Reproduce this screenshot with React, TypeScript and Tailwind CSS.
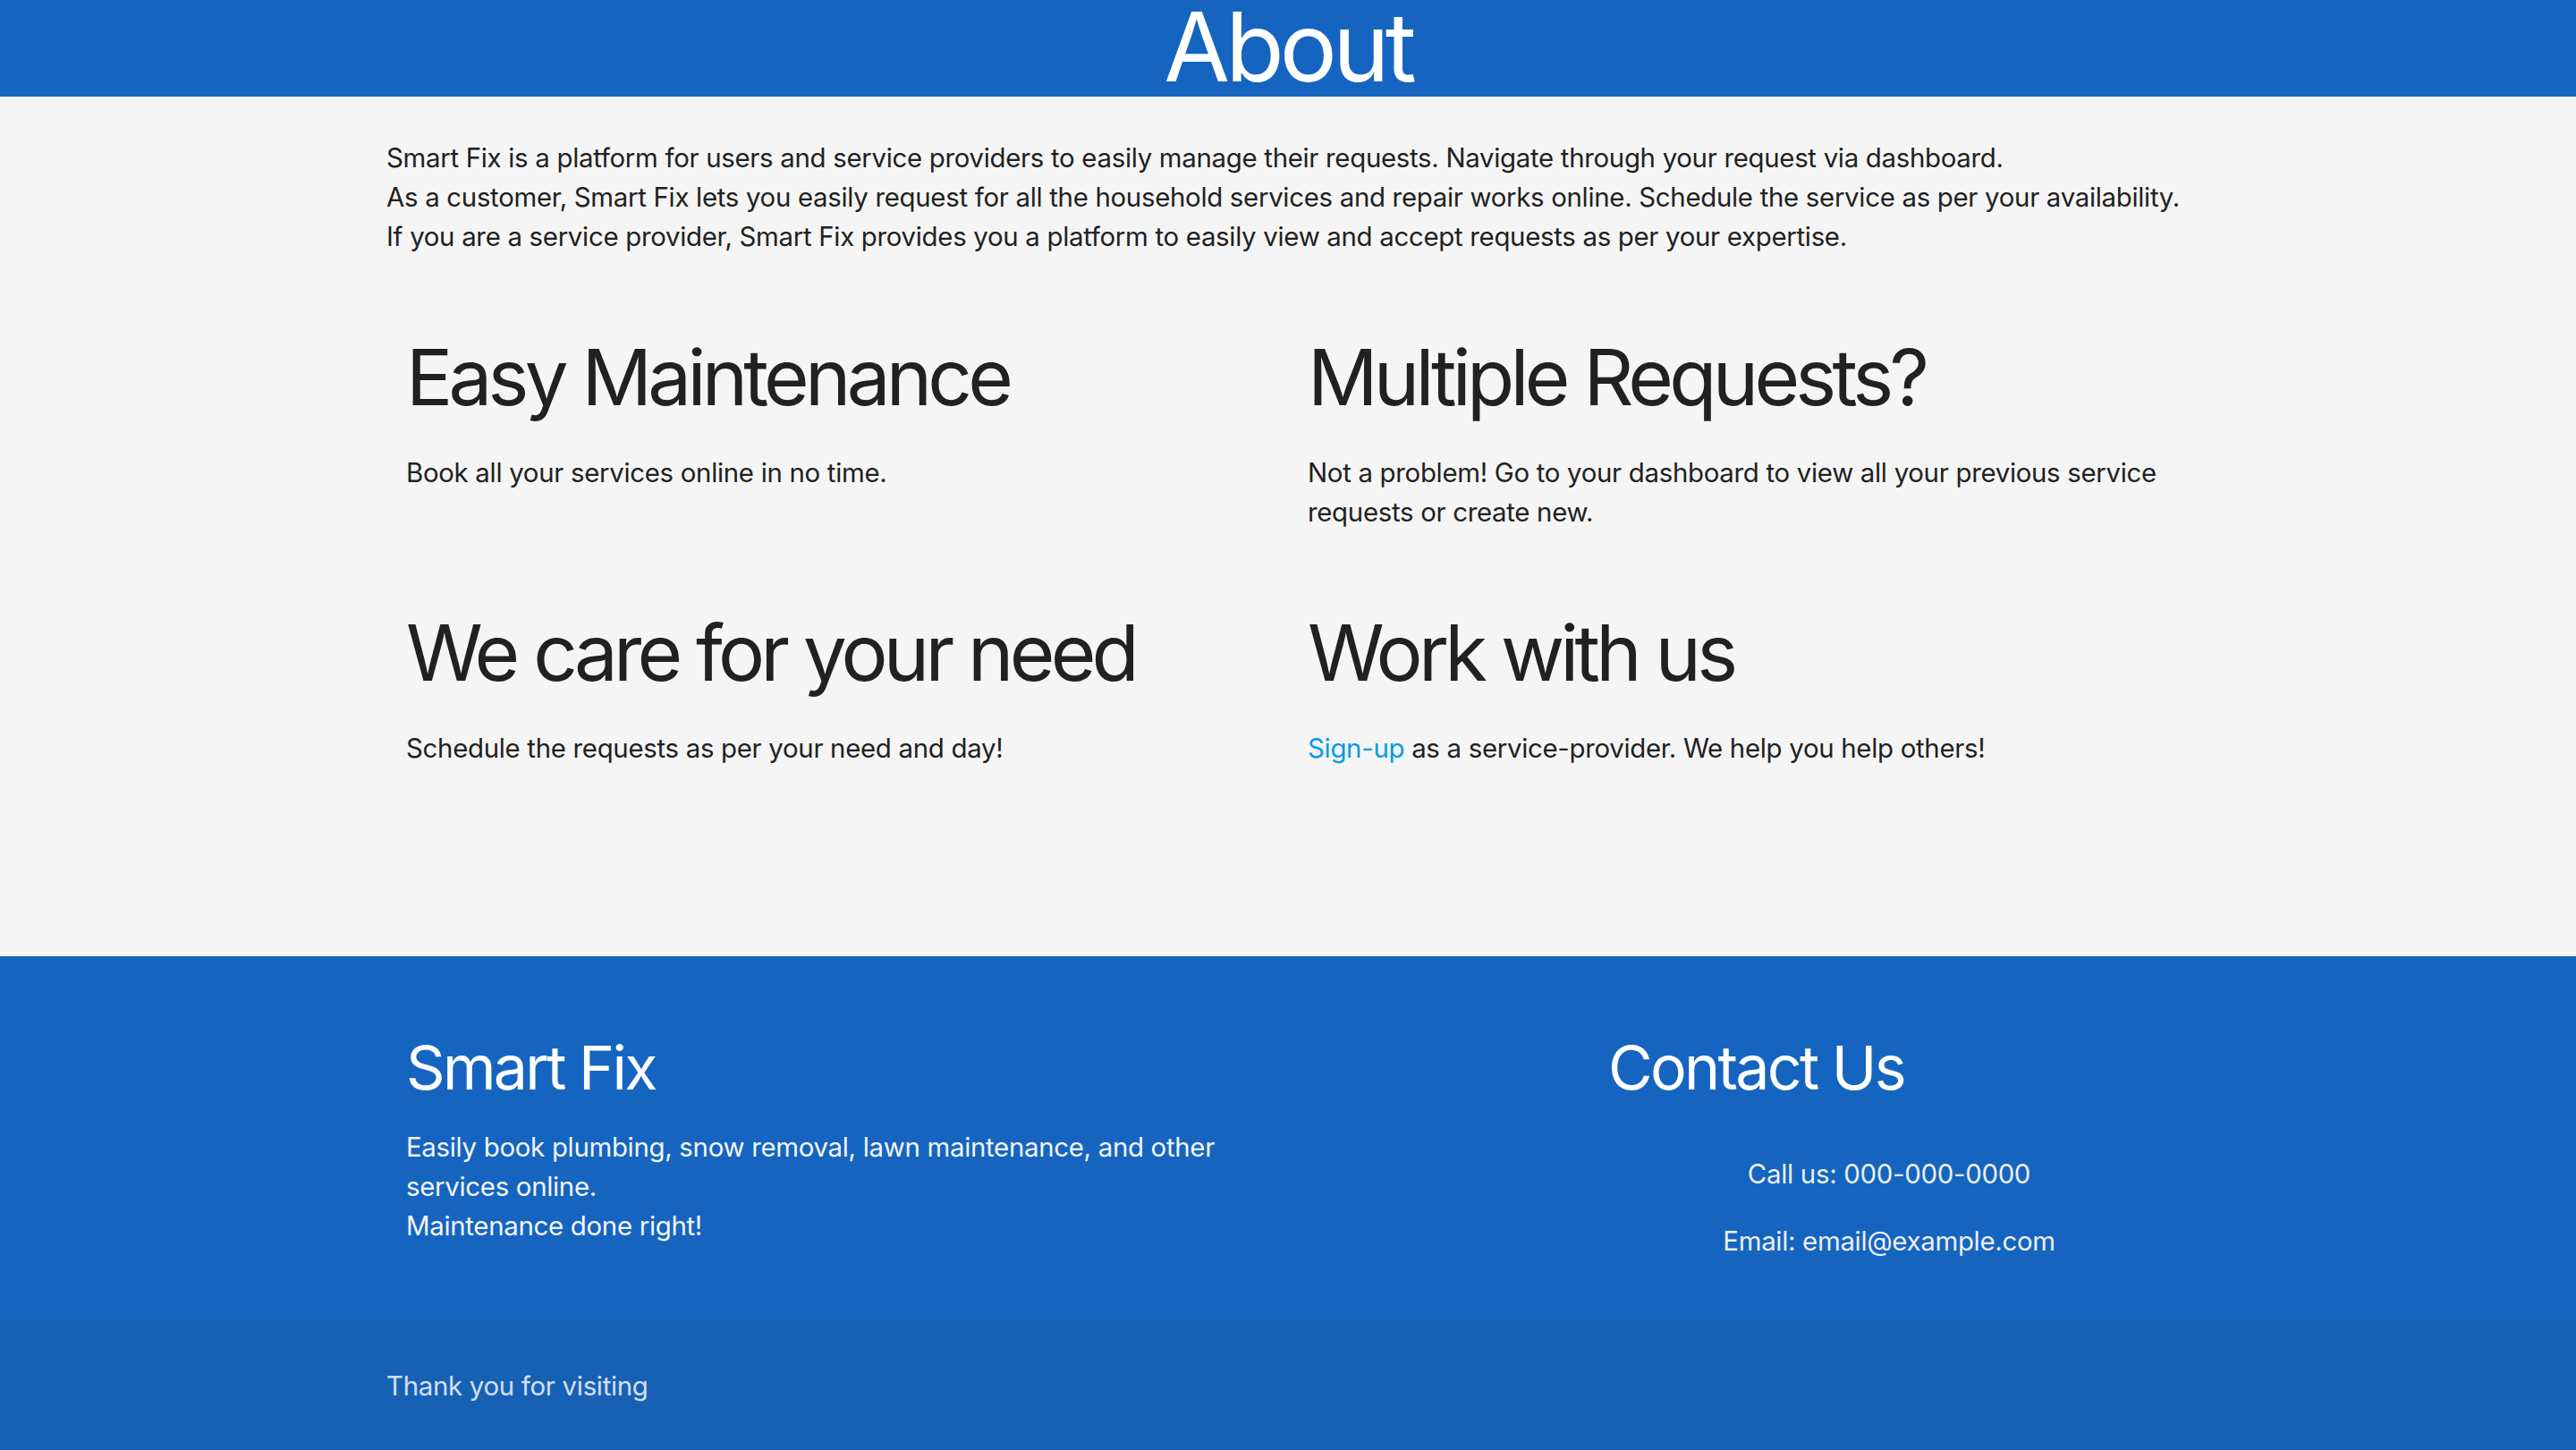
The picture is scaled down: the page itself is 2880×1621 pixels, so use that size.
const features = [
  { title: 'Easy Maintenance', body: <>Book all your services online in no time.</> },
  {
    title: 'Multiple Requests?',
    body: <>Not a problem! Go to your dashboard to view all your previous service requests or create new.</>,
  },
  { title: 'We care for your need', body: <>Schedule the requests as per your need and day!</> },
  {
    title: 'Work with us',
    body: (
      <>
        <a href="#" className="text-[#039be5]">Sign-up</a> as a service-provider. We help you help others!
      </>
    ),
  },
]

export default function App() {
  return (
    <div className="min-h-screen bg-[#f5f5f5] font-['Inter','Liberation_Sans',sans-serif] text-[29.4px] leading-[44px] tracking-[-0.3px] text-[#212121]">
      {/* header */}
      <header className="h-[108px] bg-[#1565c0]">
        <h2 className="text-center text-[107px] leading-[104px] tracking-[-0.045em] font-normal text-white">About</h2>
      </header>

      {/* main */}
      <main className="w-[70%] mx-auto pt-[47px] pb-[210px]">
        <p>
          Smart Fix is a platform for users and service providers to easily manage their requests. Navigate through your request via dashboard.
          <br />
          As a customer, Smart Fix lets you easily request for all the household services and repair works online. Schedule the service as per your availability.
          <br />
          If you are a service provider, Smart Fix provides you a platform to easily view and accept requests as per your expertise.
        </p>

        <div className="grid grid-cols-2">
          {features.map((f) => (
            <div key={f.title} className="px-[22px] pt-[87px]">
              <h3 className="text-[87px] leading-[96px] tracking-[-0.055em] font-normal">{f.title}</h3>
              <p className="mt-[37px]">{f.body}</p>
            </div>
          ))}
        </div>
      </main>

      {/* footer */}
      <footer className="bg-[#1565c0] text-white">
        <div className="w-[70%] mx-auto h-[408px] pt-[87px] grid grid-cols-12">
          <div className="col-span-6 px-[22px]">
            <h4 className="text-[68px] leading-[75px] tracking-[-0.04em] font-normal">Smart Fix</h4>
            <p className="mt-[30px] text-[#f5f5f5]">
              Easily book plumbing, snow removal, lawn maintenance, and other services online.
              <br />
              Maintenance done right!
            </p>
          </div>
          <div className="col-span-4 col-start-9 px-[22px]">
            <h4 className="text-[68px] leading-[75px] tracking-[-0.04em] font-normal">Contact Us</h4>
            <div className="mt-[60px] flex flex-col gap-[31px] text-center text-[#eeeeee]">
              <p>Call us: 000-000-0000</p>
              <p>Email: email@example.com</p>
            </div>
          </div>
        </div>
        <div className="h-[144px] bg-[#1761b5] pt-[51px]">
          <div className="w-[70%] mx-auto text-white/80">Thank you for visiting</div>
        </div>
      </footer>
    </div>
  )
}
